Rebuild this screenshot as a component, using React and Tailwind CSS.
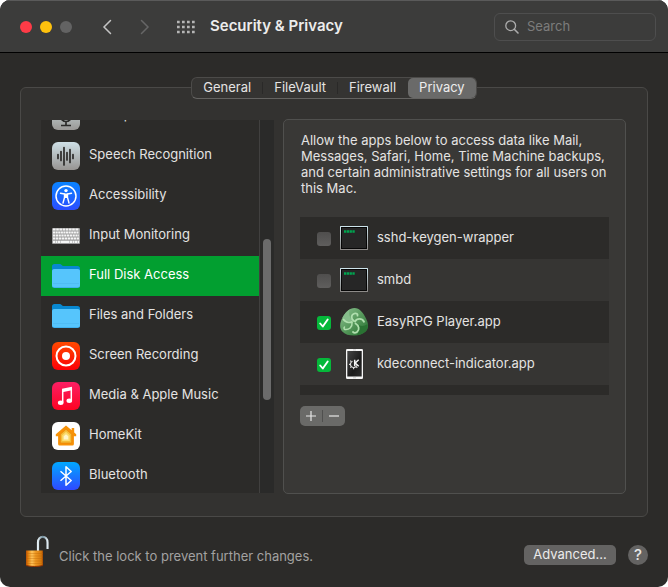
import React, { useState } from 'react';
import clsx from 'clsx';

const tabs = ['General', 'FileVault', 'Firewall', 'Privacy'];

const MicrophoneIcon = () => (
  <svg viewBox="0 0 28 28" className="h-7 w-7">
    <defs>
      <linearGradient id="mic" x1="0" y1="0" x2="0" y2="1">
        <stop offset="0" stopColor="#cfe0e4" />
        <stop offset="1" stopColor="#9a9896" />
      </linearGradient>
    </defs>
    <rect width="28" height="28" rx="6" fill="url(#mic)" />
    <rect x="11" y="4" width="6" height="12" rx="3" fill="#2b2a29" />
    <path d="M8.500 12v2a5.500 5.500 0 0 0 11 0v-2M14 19.500v4M9 23.500h10" stroke="#2b2a29" strokeWidth="1.700" fill="none" />
  </svg>
);

const SpeechIcon = () => (
  <svg viewBox="0 0 28 28" className="h-7 w-7">
    <defs>
      <linearGradient id="speech" x1="0" y1="0" x2="0" y2="1">
        <stop offset="0" stopColor="#cfe0e6" />
        <stop offset="1" stopColor="#979492" />
      </linearGradient>
    </defs>
    <rect width="28" height="28" rx="6" fill="url(#speech)" />
    <path
      d="M6 12.500v4M9 9.500v9M12 5.500v17.500M15 10.500v7.500M18 7.500v13M21 12.500v4"
      stroke="#2b2a29"
      strokeWidth="1.700"
      strokeLinecap="round"
    />
  </svg>
);

const AccessibilityIcon = () => (
  <svg viewBox="0 0 28 28" className="h-7 w-7">
    <defs>
      <linearGradient id="access" x1="0" y1="0" x2="0" y2="1">
        <stop offset="0" stopColor="#0a84ff" />
        <stop offset="1" stopColor="#2b4dff" />
      </linearGradient>
    </defs>
    <rect width="28" height="28" rx="6" fill="url(#access)" />
    <circle cx="14" cy="14" r="10" fill="none" stroke="#fff" strokeWidth="1.500" />
    <circle cx="14" cy="8.600" r="1.700" fill="#fff" />
    <path
      d="M8.500 11.300l4 .7v3.500l-1.500 5.500M19.500 11.300l-4 .7v3.500l1.500 5.500"
      stroke="#fff"
      strokeWidth="1.400"
      strokeLinecap="round"
      strokeLinejoin="round"
      fill="none"
    />
    <path d="M12 11.500h4v4.500h-4z" fill="#fff" />
  </svg>
);

const KeyboardIcon = () => (
  <svg viewBox="0 0 28 28" className="h-7 w-7">
    <rect y="6" width="28" height="16" rx="1" fill="#9c9c9c" />
    <g stroke="#f6f6f6" strokeWidth="2.200">
      <path d="M1 7.500h26" strokeDasharray="2.600 .6" />
      <path d="M1 10.500h26" strokeDasharray="2.100 .5" />
      <path d="M1 13.500h26" strokeDasharray="2.200 .6" />
      <path d="M1 16.500h26" strokeDasharray="2.400 .6" />
      <path d="M1 19.800h26" strokeDasharray="2 .5 2 .5 2 .5 9 .5" />
    </g>
  </svg>
);

const FolderIcon = () => (
  <svg viewBox="0 0 28 28" className="h-7 w-7">
    <path d="M0 20V4.500A2.500 2.500 0 0 1 2.500 2h5.300c1.500 0 2.200 2 3.700 2h14A2.500 2.500 0 0 1 28 6.500V20z" fill="#0888d1" />
    <rect y="7" width="28" height="19" rx="2.500" fill="#3aa9e8" />
    <rect y="7" width="28" height="18.300" rx="2.500" fill="#56c5fc" />
    <path d="M1 21.500h26" stroke="#4fbcf4" />
  </svg>
);

const ScreenRecordingIcon = () => (
  <svg viewBox="0 0 28 28" className="h-7 w-7">
    <defs>
      <linearGradient id="record" x1="0" y1="0" x2="0" y2="1">
        <stop offset="0" stopColor="#ff4a00" />
        <stop offset="1" stopColor="#fb0007" />
      </linearGradient>
    </defs>
    <rect width="28" height="28" rx="6" fill="url(#record)" />
    <circle cx="14" cy="14" r="9.500" fill="none" stroke="#fff" strokeWidth="2" />
    <circle cx="14" cy="14" r="4" fill="#fff" />
  </svg>
);

const MusicIcon = () => (
  <svg viewBox="0 0 28 28" className="h-7 w-7">
    <defs>
      <linearGradient id="music" x1="0" y1="0" x2="0" y2="1">
        <stop offset="0" stopColor="#fb1f64" />
        <stop offset="1" stopColor="#fd0322" />
      </linearGradient>
    </defs>
    <rect width="28" height="28" rx="6" fill="url(#music)" />
    <path d="M10 6.800l10-2v3.500l-10 2z" fill="#fff" />
    <path d="M10.700 7.500v13M19.300 6v12.500" stroke="#fff" strokeWidth="1.500" />
    <ellipse cx="8.700" cy="20.700" rx="2.800" ry="2.200" fill="#fff" />
    <ellipse cx="17.300" cy="18.800" rx="2.800" ry="2.200" fill="#fff" />
  </svg>
);

const HomeKitIcon = () => (
  <svg viewBox="0 0 28 28" className="h-7 w-7">
    <rect width="28" height="28" rx="6" fill="#fff" />
    <path
      d="M14 3.500L3.800 12.300v2h2.300V22a1.500 1.500 0 0 0 1.500 1.500h12.800a1.500 1.500 0 0 0 1.500-1.500v-7.700h2.300v-2l-2-1.700V6h-2.500v2.300z"
      fill="#f79208"
    />
    <path d="M14 7.300l5.700 5v8.700H8.300v-8.700z" fill="#f4bd3a" stroke="#e97f02" strokeWidth=".6" />
    <path d="M14 9.800l3.800 3.500v5.700h-7.600v-5.700z" fill="#fbdc70" />
    <path d="M14 12.300l2.300 2v3.200h-4.600v-3.200z" fill="#fff6cc" />
  </svg>
);

const BluetoothIcon = () => (
  <svg viewBox="0 0 28 28" className="h-7 w-7">
    <defs>
      <linearGradient id="bluetooth" x1="0" y1="0" x2="0" y2="1">
        <stop offset="0" stopColor="#00a8ff" />
        <stop offset="1" stopColor="#2f49ff" />
      </linearGradient>
    </defs>
    <rect width="28" height="28" rx="6" fill="url(#bluetooth)" />
    <path d="M8.500 9.300l10.700 9.200-5.200 4.800V4.700l5.200 4.800-10.700 9.200" stroke="#fff" strokeWidth="1.500" fill="none" strokeLinejoin="round" />
  </svg>
);

const TerminalIcon = () => (
  <svg viewBox="0 0 28 28" className="h-7 w-7">
    <defs>
      <linearGradient id="terminal" x1="0" y1="0" x2="0" y2="1">
        <stop offset="0" stopColor="#cfe6ee" />
        <stop offset="1" stopColor="#8b8886" />
      </linearGradient>
    </defs>
    <rect y="2" width="28" height="24" rx=".5" fill="url(#terminal)" />
    <rect x="1" y="3" width="26" height="22" fill="#060606" />
    <rect x="2" y="4" width="24" height="20" fill="#262626" />
    <path d="M4 7.500h11" stroke="#00a550" strokeWidth="2.600" strokeDasharray="2.300 .5" />
  </svg>
);

const EasyRpgIcon = () => (
  <svg viewBox="0 0 28 28" className="h-7 w-7">
    <defs>
      <linearGradient id="slime" x1="0" y1="0" x2="1" y2="1">
        <stop offset="0" stopColor="#8fc493" />
        <stop offset=".5" stopColor="#57995c" />
        <stop offset="1" stopColor="#257030" />
      </linearGradient>
    </defs>
    <path d="M14.500 0C19.500 0 23.500 5 26 10.500c2.600 5 3 9.500 0 12.700-3 2.800-7 4.300-12 4.300S5 26.500 2 23.200C-1 19.500 0 14.500 2.500 9.500 5.500 4 9.500 0 14.500 0z" fill="url(#slime)" />
    <path d="M2.500 9.500C4.500 6 7 3 9.500 1.500c-1 5 0 8 3.500 11-3 1.500-8 1-10.500-3z" fill="#86bd8b" />
    <path d="M16 15c4 4 8 3.500 11.500 1 .6 3-.2 5.500-2 7.400-2.500 2.300-5.500 3.300-9 3.900 3.500-3 3.500-8-.5-12.300z" fill="#2a7333" />
    <g fill="none" stroke="#b0dfae" strokeLinecap="round">
      <path d="M14 13c-3-2-3.500-6 .5-7.500 2-.6 3.500.6 3 2.200" strokeWidth="1.800" />
      <path d="M15 13.500c2-3.500 7-3.500 9 .2" strokeWidth="1.900" />
      <path d="M12 14c-3 1-7 0-8.500-2.500" strokeWidth="1.900" />
      <path d="M12 15c.5 4-3 7-7 6.500-1-.3-1.400-1.600-.5-2.500" strokeWidth="1.500" />
      <path d="M15.500 15.500c3.500 2 4.500 6 1.500 8.500-1.500 1-3.200.8-4 0" strokeWidth="1.800" />
    </g>
  </svg>
);

const KdeConnectIcon = () => (
  <svg viewBox="0 0 28 30" className="h-[30px] w-7">
    <defs>
      <linearGradient id="phone" x1="0" y1="0" x2="1" y2="1">
        <stop offset="0" stopColor="#454545" />
        <stop offset=".6" stopColor="#1b1b1b" />
        <stop offset="1" stopColor="#2d2d2d" />
      </linearGradient>
    </defs>
    <rect x="6" width="17" height="30" rx="1.200" fill="#f5f5f5" />
    <rect x="7.300" y="2" width="14.400" height="25.500" fill="url(#phone)" />
    <path d="M13 .9h3M13 28.800h3" stroke="#bbb" strokeWidth=".7" />
    <path d="M12.500 12.200a3.300 3.300 0 1 0 4.300 4.300" fill="none" stroke="#ddd" strokeWidth="1.100" />
    <path d="M9 15.300h1.500M10.300 18.700l1-1M13.600 20.300v-1.500M17.300 18.900l-1-1M10.300 11.600l1 1" stroke="#ddd" strokeWidth="1.200" />
    <path d="M14.700 10.800v6.500M18.700 10.800l-3.500 3.200 3.500 3.300" stroke="#f5f5f5" strokeWidth="1.500" fill="none" />
  </svg>
);

const LockIcon = () => (
  <svg viewBox="0 0 32 34" className="h-[34px] w-8">
    <defs>
      <linearGradient id="brass" x1="0" y1="0" x2="1" y2="0">
        <stop offset="0" stopColor="#b94f03" />
        <stop offset=".15" stopColor="#e88a14" />
        <stop offset=".35" stopColor="#ffc45a" />
        <stop offset=".55" stopColor="#ef9a24" />
        <stop offset=".9" stopColor="#d4780c" />
        <stop offset="1" stopColor="#9c4204" />
      </linearGradient>
      <linearGradient id="shackle" x1="0" y1="0" x2="1" y2="0">
        <stop offset="0" stopColor="#e6f1f5" />
        <stop offset=".5" stopColor="#6f8b99" />
        <stop offset="1" stopColor="#dfeaf0" />
      </linearGradient>
    </defs>
    <path d="M18 17V8.500c0-7.500 9.500-7.500 9.500 0V15" fill="none" stroke="url(#shackle)" strokeWidth="2.200" />
    <path d="M6 16.500h17v15c-5 1.300-12 1.300-17 0z" fill="url(#brass)" />
    <path d="M6 19.500h17M6 22h17M6 24.500h17M6 27h17M6 29.500h17" stroke="#b86408" strokeWidth=".6" opacity=".6" />
    <path d="M6 31.500c5 1.300 12 1.300 17 0" stroke="#8c3002" fill="none" />
  </svg>
);

const categories = [
  { name: 'Microphone', icon: MicrophoneIcon },
  { name: 'Speech Recognition', icon: SpeechIcon },
  { name: 'Accessibility', icon: AccessibilityIcon },
  { name: 'Input Monitoring', icon: KeyboardIcon },
  { name: 'Full Disk Access', icon: FolderIcon },
  { name: 'Files and Folders', icon: FolderIcon },
  { name: 'Screen Recording', icon: ScreenRecordingIcon },
  { name: 'Media & Apple Music', icon: MusicIcon },
  { name: 'HomeKit', icon: HomeKitIcon },
  { name: 'Bluetooth', icon: BluetoothIcon },
];

const initialApps = [
  { name: 'sshd-keygen-wrapper', icon: TerminalIcon, allowed: false },
  { name: 'smbd', icon: TerminalIcon, allowed: false },
  { name: 'EasyRPG Player.app', icon: EasyRpgIcon, allowed: true },
  { name: 'kdeconnect-indicator.app', icon: KdeConnectIcon, allowed: true },
];

const TitleBar = () => (
  <header className="flex h-[53px] shrink-0 items-center border-t border-b border-t-[#5a5a5a] border-b-black bg-[#3c3c3b] pr-3 pl-5">
    <div className="flex gap-2">
      <button aria-label="Close" className="h-3 w-3 rounded-full bg-[#ff3b47]" />
      <button aria-label="Minimize" className="h-3 w-3 rounded-full bg-[#ffc20d]" />
      <button aria-label="Zoom" className="h-3 w-3 rounded-full bg-[#636363]" />
    </div>
    <div className="ml-7 flex gap-6">
      <button aria-label="Back">
        <svg viewBox="0 0 14 16" className="h-4 w-3.5">
          <path d="M10.500 1.500L4 8l6.500 6.500" fill="none" stroke="#c4c4c4" strokeWidth="1.500" strokeLinecap="round" />
        </svg>
      </button>
      <button aria-label="Forward">
        <svg viewBox="0 0 14 16" className="h-4 w-3.5">
          <path d="M3.500 1.500L10 8l-6.500 6.500" fill="none" stroke="#666" strokeWidth="1.500" strokeLinecap="round" />
        </svg>
      </button>
    </div>
    <button aria-label="Show All" className="ml-6">
      <svg viewBox="0 0 20 14" className="h-3.5 w-5">
        <path d="M1 2h18M1 7h18M1 12h18" stroke="#b5b5b5" strokeWidth="2.700" strokeDasharray="2.700 2.300" />
      </svg>
    </button>
    <h1 className="ml-3.5 text-[15px] font-semibold text-[#ececec]">Security &amp; Privacy</h1>
    <div className="ml-auto flex h-7 w-[162px] items-center gap-2 rounded-md border border-[#4e4e4e] px-2.5">
      <svg viewBox="0 0 14 14" className="h-3.5 w-3.5 shrink-0">
        <circle cx="5.700" cy="5.700" r="4.900" fill="none" stroke="#acacac" strokeWidth="1.300" />
        <path d="M9.300 9.300l3.700 3.700" stroke="#acacac" strokeWidth="1.600" strokeLinecap="round" />
      </svg>
      <input
        type="search"
        aria-label="Search"
        placeholder="Search"
        className="w-full min-w-0 bg-transparent text-[13px] text-[#dedede] outline-none placeholder:text-[#7c7c7c]"
      />
    </div>
  </header>
);

const App = () => {
  const [tab, setTab] = useState('Privacy');
  const [category, setCategory] = useState('Full Disk Access');
  const [apps, setApps] = useState(initialApps);

  const toggleApp = (name) => {
    setApps(apps.map((app) => (app.name === name ? { ...app, allowed: !app.allowed } : app)));
  };

  return (
    <div className="h-screen bg-white font-['Inter',sans-serif] text-[13px] text-[#e4e3e2]">
      <div className="flex h-full flex-col overflow-hidden rounded-[10px] bg-[#2c2b29]">
        <TitleBar />

        <main className="flex min-h-0 flex-1 flex-col px-5 pt-6">
          {/* Tabs, centred on the top edge of the group box */}
          <div
            role="tablist"
            className="z-10 -mb-3 flex h-[22px] shrink-0 self-center rounded-md border border-[#4c4b49] border-b-[#646361] bg-[#353432]"
          >
            {tabs.map((name, i) => (
              <div key={name} className="flex items-center">
                {i > 0 && <span className={clsx('h-3 w-px', i < 3 ? 'bg-[#2a2928]' : 'bg-transparent')} />}
                <button
                  role="tab"
                  aria-selected={tab === name}
                  onClick={() => setTab(name)}
                  className={clsx('h-5 rounded-[5px] px-[11px]', tab === name && 'bg-[#6a6a69] text-[#ededed]')}
                >
                  {name}
                </button>
              </div>
            ))}
          </div>

          <section className="flex min-h-0 flex-1 gap-[9px] rounded-md border border-[#4a4947] bg-[#333230] pt-[31px] pr-[21px] pb-[22px] pl-5">
            {/* Categories */}
            <div className="my-px flex w-[233px] shrink-0 overflow-hidden bg-[#2c2b29]">
              <ul className="-mt-6 flex-1">
                {categories.map(({ name, icon: Icon }) => (
                  <li key={name}>
                    <button
                      onClick={() => setCategory(name)}
                      className={clsx(
                        'flex h-10 w-full items-center gap-[9px] pl-[11px] text-left',
                        category === name && 'bg-[#029f30] text-white'
                      )}
                    >
                      <Icon />
                      <span className="pb-0.5">{name}</span>
                    </button>
                  </li>
                ))}
              </ul>
              <div className="w-[15px] border-l border-[#41403f] bg-[#2a2a29] pt-[119px] pl-[3px]">
                <div className="h-[161px] w-2 rounded-full bg-[#6b6b6b]" />
              </div>
            </div>

            {/* Apps */}
            <div className="min-w-0 flex-1 rounded-[5px] border border-[#50504e] bg-[#393836] px-4 pt-3">
              <p className="pl-px leading-4">
                Allow the apps below to access data like Mail, Messages, Safari, Home, Time Machine backups, and certain
                administrative settings for all users on this Mac.
              </p>
              <ul className="mt-[21px] bg-[#2c2b29] pb-2.5">
                {apps.map(({ name, icon: Icon, allowed }) => (
                  <li key={name} className="even:bg-[#363533]">
                    <label className="flex h-[42px] items-center pl-[17px]">
                      <span className="mt-0.5 grid">
                        <input
                          type="checkbox"
                          checked={allowed}
                          onChange={() => toggleApp(name)}
                          className="col-start-1 row-start-1 h-3.5 w-3.5 appearance-none rounded-[3px] bg-linear-to-b from-[#4f4e4d] to-[#5f5e5d] checked:from-[#05b83a] checked:to-[#05b83a]"
                        />
                        {allowed && (
                          <svg viewBox="0 0 14 14" className="pointer-events-none col-start-1 row-start-1 h-3.5 w-3.5">
                            <path d="M3.200 7.500l2.600 3 4.900-7" fill="none" stroke="#fff" strokeWidth="1.900" strokeLinecap="round" strokeLinejoin="round" />
                          </svg>
                        )}
                      </span>
                      <span className="ml-[9px]">
                        <Icon />
                      </span>
                      <span className="ml-[9px]">{name}</span>
                    </label>
                  </li>
                ))}
              </ul>
              <div className="mt-[11px] flex h-5 w-[45px] items-center rounded-[5px] bg-[#6a6a68]">
                <button aria-label="Add" className="flex h-full flex-1 items-center justify-center">
                  <svg viewBox="0 0 12 12" className="h-3 w-3">
                    <path d="M6 1v10M1 6h10" stroke="#e8e8e8" strokeWidth="1.200" />
                  </svg>
                </button>
                <span className="h-3 w-px bg-[#4f4f4e]" />
                <button aria-label="Remove" className="flex h-full flex-1 items-center justify-center">
                  <svg viewBox="0 0 12 12" className="h-3 w-3">
                    <path d="M1 6h10" stroke="#e8e8e8" strokeWidth="1.200" />
                  </svg>
                </button>
              </div>
            </div>
          </section>
        </main>

        <footer className="flex h-[70px] shrink-0 items-center px-5 pt-1.5">
          <button aria-label="Lock" className="-mt-2">
            <LockIcon />
          </button>
          <span className="ml-[7px] pt-1 text-[#a3a2a1]">Click the lock to prevent further changes.</span>
          <button className="ml-auto h-5 w-[92px] rounded-[5px] bg-[#646362] text-[#ebebeb]">Advanced...</button>
          <button aria-label="Help" className="ml-3 h-5 w-5 rounded-full bg-[#646362] text-[15px] leading-5 font-medium text-[#e6e6e6]">
            ?
          </button>
        </footer>
      </div>
    </div>
  );
};

export default App;
